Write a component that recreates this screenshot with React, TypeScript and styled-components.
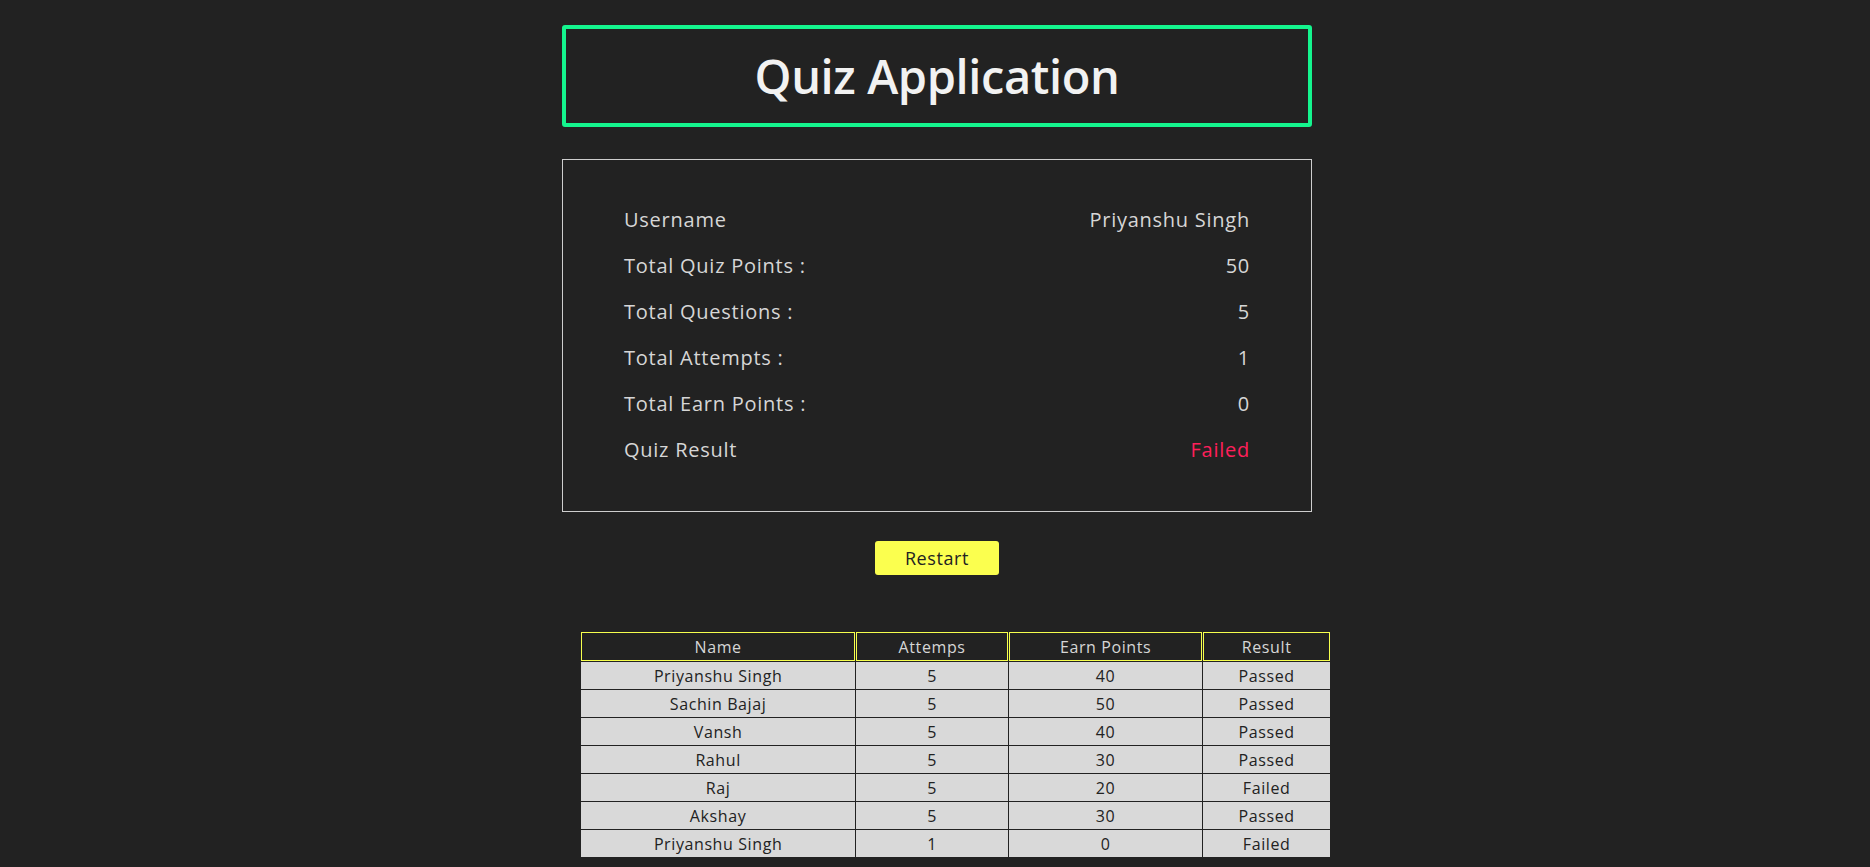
import React from 'react';
import styled, { createGlobalStyle } from 'styled-components';

const GlobalStyle = createGlobalStyle`
  html, body {
    margin: 0;
    padding: 0;
    background-color: #222222;
  }
  body {
    font-family: "Open Sans", "Liberation Sans", sans-serif;
  }
`;

type Attempt = { name: string; attempts: number; points: number; passed: boolean };

const attempts: Attempt[] = [
  { name: 'Priyanshu Singh', attempts: 5, points: 40, passed: true },
  { name: 'Sachin Bajaj', attempts: 5, points: 50, passed: true },
  { name: 'Vansh', attempts: 5, points: 40, passed: true },
  { name: 'Rahul', attempts: 5, points: 30, passed: true },
  { name: 'Raj', attempts: 5, points: 20, passed: false },
  { name: 'Akshay', attempts: 5, points: 30, passed: true },
  { name: 'Priyanshu Singh', attempts: 1, points: 0, passed: false },
];

const summary = [
  { label: 'Username', value: 'Priyanshu Singh' },
  { label: 'Total Quiz Points :', value: '50' },
  { label: 'Total Questions :', value: '5' },
  { label: 'Total Attempts :', value: '1' },
  { label: 'Total Earn Points :', value: '0' },
];

const columns = [
  { title: 'Name', width: 273 },
  { title: 'Attemps', width: 150 },
  { title: 'Earn Points', width: 192 },
  { title: 'Result', width: 125 },
];

function App() {
  return (
    <Page>
      <GlobalStyle />
      <Container>
        <Title>Quiz Application</Title>

        <ResultBox>
          {summary.map((row) => (
            <Row key={row.label}>
              <span>{row.label}</span>
              <Value>{row.value}</Value>
            </Row>
          ))}
          <Row>
            <span>Quiz Result</span>
            <Value failed>Failed</Value>
          </Row>
        </ResultBox>

        <ButtonRow>
          <RestartButton>Restart</RestartButton>
        </ButtonRow>

        <TableWrap>
          <Table>
            <thead>
              <tr>
                {columns.map((c) => (
                  <Th key={c.title} w={c.width}>{c.title}</Th>
                ))}
              </tr>
            </thead>
            <tbody>
              {attempts.map((a, i) => (
                <tr key={i}>
                  <Td>{a.name}</Td>
                  <Td>{a.attempts}</Td>
                  <Td>{a.points}</Td>
                  <Td>{a.passed ? 'Passed' : 'Failed'}</Td>
                </tr>
              ))}
            </tbody>
          </Table>
        </TableWrap>
      </Container>
    </Page>
  );
}

export default App;

const Page = styled.div`
  display: flex;
  justify-content: center;
  padding-left: 4px;
  min-height: 867px;
  box-sizing: border-box;
`;

const Container = styled.div`
  width: 750px;
  display: flex;
  flex-direction: column;
  padding-top: 25px;
`;

const Title = styled.h1`
  margin: 0;
  height: 102px;
  box-sizing: border-box;
  border: 4px solid #14f58e;
  border-radius: 3px;
  display: flex;
  align-items: center;
  justify-content: center;
  color: #f2f2f2;
  font-size: 47px;
  font-weight: 600;
  letter-spacing: -0.4px;
`;

const ResultBox = styled.div`
  margin-top: 32px;
  border: 1px solid #cecece;
  padding: 45px 61px 46px;
  display: flex;
  flex-direction: column;
  gap: 16px;
`;

const Row = styled.div`
  display: flex;
  justify-content: space-between;
  align-items: center;
  font-size: 20px;
  line-height: 30px;
  letter-spacing: 0.75px;
  color: #d6d6d6;
`;

const Value = styled.span<{ failed?: boolean }>`
  color: ${({ failed }) => (failed ? '#ff1f5a' : '#d6d6d6')};
`;

const ButtonRow = styled.div`
  display: flex;
  justify-content: center;
  margin-top: 29px;
`;

const RestartButton = styled.button`
  width: 124px;
  height: 34px;
  border: none;
  border-radius: 3px;
  background-color: #fbff4f;
  color: #222222;
  font-family: inherit;
  font-size: 18px;
  letter-spacing: 0.6px;
  cursor: pointer;
`;

const TableWrap = styled.div`
  margin-top: 56px;
  padding-left: 18px;
`;

const Table = styled.table`
  width: 751px;
  border-collapse: separate;
  border-spacing: 1px;
  font-size: 16px;
  letter-spacing: 0.6px;
  text-align: center;
`;

const Th = styled.th<{ w: number }>`
  width: ${({ w }) => w}px;
  height: 27px;
  padding: 0;
  border: 1px solid #f6ff4d;
  background-color: #222222;
  color: #d6d6d6;
  font-weight: 400;
`;

const Td = styled.td`
  height: 27px;
  padding: 0;
  background-color: #d9d9d9;
  color: #222222;
`;
